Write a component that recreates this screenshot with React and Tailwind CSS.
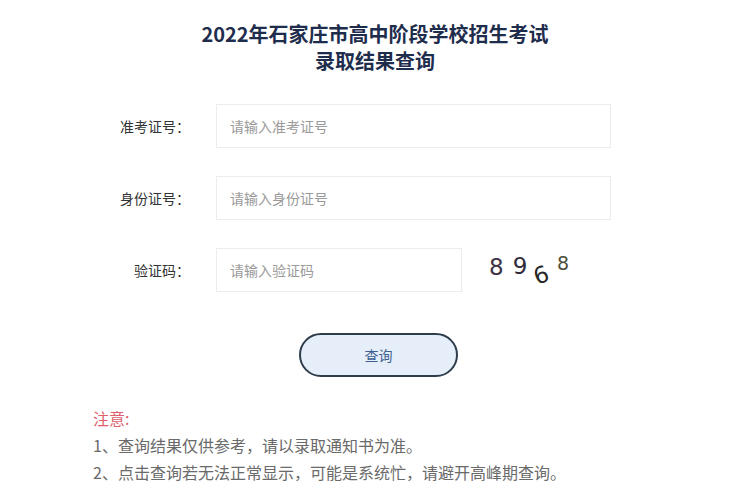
import React from 'react';

const font = { fontFamily: "'Noto Sans CJK SC', 'Noto Sans', sans-serif" };

const Field = ({ label, placeholder, width }) => (
  <div className="flex items-center">
    <label className="w-[190px] text-right text-[14px] text-[#333]">{label}</label>
    <input
      className={`ml-[26px] h-[44px] ${width} border border-[#ececec] bg-white px-[13px] text-[14px] text-[#333] outline-none placeholder:text-[#9a9a9a]`}
      placeholder={placeholder}
    />
  </div>
);

// hand-drawn looking verification digits
const Captcha = () => (
  <div className="ml-[27px] flex items-start text-[23px] leading-none" style={{ fontFamily: "'DejaVu Sans', sans-serif" }}>
    <span className="mt-[2px] text-[#3e3346]">8</span>
    <span className="ml-[9px] mt-[1px] text-[#2f2b3a]">9</span>
    <span className="ml-[7px] mt-[10px] -rotate-[20deg] text-[#262626]">6</span>
    <span className="ml-[8px] mt-[0px] text-[19px] text-[#4d4f38]">8</span>
  </div>
);

export default function App() {
  return (
    <div className="min-h-screen w-[750px] bg-white" style={font}>
      <div className="pt-[20px] text-center text-[20px] font-bold leading-[27px] text-[#1f2d4d]">
        <h1>2022年石家庄市高中阶段学校招生考试</h1>
        <h2>录取结果查询</h2>
      </div>

      <div className="mt-[30px] flex flex-col gap-[28px]">
        <Field label="准考证号：" placeholder="请输入准考证号" width="w-[395px]" />
        <Field label="身份证号：" placeholder="请输入身份证号" width="w-[395px]" />
        <div className="flex items-center">
          <Field label="验证码：" placeholder="请输入验证码" width="w-[246px]" />
          <Captcha />
        </div>
      </div>

      <button className="ml-[299px] mt-[41px] h-[44px] w-[159px] rounded-full border-2 border-[#2e3d4c] bg-[#e6eef9] text-[14px] text-[#3d5f8f]">
        查询
      </button>

      <div className="ml-[93px] mt-[28px] text-[16px] leading-[27px] text-[#6a6a6a]">
        <p className="text-[#e0606e]">注意:</p>
        <p>1、查询结果仅供参考，请以录取通知书为准。</p>
        <p>2、点击查询若无法正常显示，可能是系统忙，请避开高峰期查询。</p>
      </div>
    </div>
  );
}
